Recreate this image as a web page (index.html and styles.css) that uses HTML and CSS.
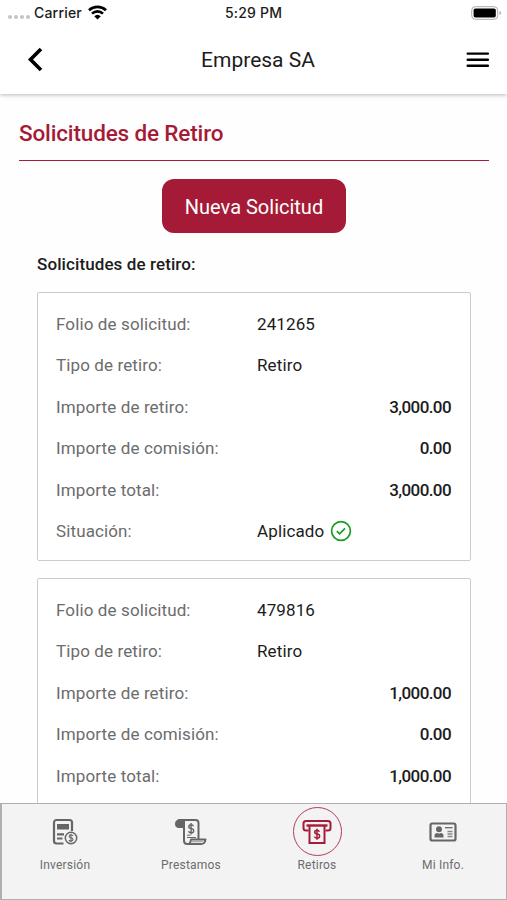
FILE: index.html
```html
<!DOCTYPE html>
<html lang="es">
<head>
    <meta charset="UTF-8">
    <meta name="viewport" content="width=device-width, initial-scale=1.0">
    <title>Solicitudes de Retiro</title>
    <link rel="stylesheet" href="styles.css">
</head>
<body>
    <div class="app">
        <header class="top">
            <div class="status">
                <div class="carrier">
                    <span class="dots"><i></i><i></i><i></i><i></i></span>
                    <span>Carrier</span>
                    <svg width="19" height="15" viewBox="0 0 19 15" fill="none" stroke="#000" stroke-width="2.6">
                        <path d="M1 5.3a12.3 12.3 0 0 1 17 0M4 8.6a8 8 0 0 1 11 0"/>
                        <path d="M9.5 14.5L6.2 11.2a4.8 4.8 0 0 1 6.6 0z" fill="#000" stroke="none"/>
                    </svg>
                </div>
                <div class="time">5:29 PM</div>
                <svg class="battery" width="31" height="14" viewBox="0 0 31 14">
                    <rect x=".7" y=".7" width="26" height="12.6" rx="3.6" fill="none" stroke="#aaa"/>
                    <rect x="2.6" y="2.5" width="22.2" height="9" rx="1.8"/>
                    <path d="M28.5 5v4q1.6-.6 1.6-2t-1.6-2z" fill="#aaa"/>
                </svg>
            </div>
            <nav class="bar">
                <svg width="16" height="26" viewBox="0 0 16 26" fill="none" stroke="#000" stroke-width="3.6">
                    <path d="M14 2L3.5 12.5L14 23"/>
                </svg>
                <h1>Empresa SA</h1>
                <svg width="24" height="18" viewBox="0 0 24 18" stroke="#000" stroke-width="2.4" stroke-linecap="round">
                    <path d="M1.7 2.6h20.2M1.7 8.7h20.2M1.7 14.8h20.2"/>
                </svg>
            </nav>
        </header>

        <main>
            <h2>Solicitudes de Retiro</h2>
            <button class="new">Nueva Solicitud</button>
            <h3>Solicitudes de retiro:</h3>

            <section class="card">
                <div class="row"><span>Folio de solicitud:</span><b>241265</b></div>
                <div class="row"><span>Tipo de retiro:</span><b>Retiro</b></div>
                <div class="row"><span>Importe de retiro:</span><b class="amount">3,000.00</b></div>
                <div class="row"><span>Importe de comisión:</span><b class="amount">0.00</b></div>
                <div class="row"><span>Importe total:</span><b class="amount">3,000.00</b></div>
                <div class="row"><span>Situación:</span><b class="state">Aplicado
                    <svg width="22" height="22" viewBox="0 0 22 22" fill="none" stroke="#1c9c27" stroke-width="1.7">
                        <circle cx="11" cy="11" r="9.4"/>
                        <path d="M6.8 11.2l2.8 2.7 5.4-5.6"/>
                    </svg></b>
                </div>
            </section>

            <section class="card">
                <div class="row"><span>Folio de solicitud:</span><b>479816</b></div>
                <div class="row"><span>Tipo de retiro:</span><b>Retiro</b></div>
                <div class="row"><span>Importe de retiro:</span><b class="amount">1,000.00</b></div>
                <div class="row"><span>Importe de comisión:</span><b class="amount">0.00</b></div>
                <div class="row"><span>Importe total:</span><b class="amount">1,000.00</b></div>
            </section>
        </main>

        <footer class="tabs">
            <a class="tab">
                <span class="icon">
                    <svg width="26" height="28" viewBox="0 0 26 28" fill="none" stroke="#666" stroke-width="2.2">
                        <path d="M11.5 25.5h-7A2.5 2.5 0 0 1 2 23V4.5A2.5 2.5 0 0 1 4.5 2h13A2.5 2.5 0 0 1 20 4.5V13"/>
                        <path d="M5 6h12v5.5H5z" fill="#666" stroke="none"/>
                        <path d="M5 16.3h7M5 20.5h5.5"/>
                        <circle cx="19" cy="20" r="5.7" stroke-width="1.5"/>
                        <path d="M21 18q-.5-1.2-2-1.2-1.8 0-1.8 1.5t1.8 1.6q2 .2 2 1.7T19 23.2q-1.7 0-2.1-1.2M19 15.8v8.4" stroke-width="1.1"/>
                    </svg>
                </span>
                Inversión
            </a>
            <a class="tab">
                <span class="icon">
                    <svg width="32" height="28" viewBox="0 0 32 28" fill="none" stroke="#666" stroke-width="2" stroke-linejoin="round">
                        <path d="M9 9H3.5Q1 8.7 1 6t3-4h5z" fill="#666"/>
                        <path d="M5 2h15.5q3 0 3 3v16.5M9 6v16.5q0 3.5 3.2 3.5H26q4 0 4.5-4.5H16q-.5 4.5-3.5 4.5"/>
                        <path d="M16 24.2q.8-.6 1-1.7h12q-.8 1.7-3.5 1.7z" fill="#aaa" stroke="none"/>
                        <path d="M18.5 8.2q-.6-1.5-2.4-1.5-2.3 0-2.3 1.9t2.4 2q2.5.1 2.5 2.2t-2.6 2q-2.1 0-2.6-1.6M16.1 5v11.5" stroke-width="1.4"/>
                        <path d="M12 17.2h3.5M12 19.5h9" stroke-width="1"/>
                    </svg>
                </span>
                Prestamos
            </a>
            <a class="tab">
                <span class="icon active">
                    <svg width="30" height="26" viewBox="0 0 30 26" fill="none" stroke="#a51a36" stroke-width="2">
                        <path d="M6.5 11.5H4q-2.5 0-2.5-2.5V4.5Q1.5 2 4 2h22q2.5 0 2.5 2.5V9q0 2.5-2.5 2.5h-2.5"/>
                        <path d="M4.5 6.5h21" stroke-width="2.4"/>
                        <path d="M7.5 7v17h15V7"/>
                        <path d="M17.4 12.8q-.6-1.5-2.4-1.5-2.3 0-2.3 1.8t2.4 2q2.5.1 2.5 2.1t-2.6 2q-2.1 0-2.6-1.6M15 9.8v10.9" stroke-width="1.5"/>
                    </svg>
                </span>
                Retiros
            </a>
            <a class="tab">
                <span class="icon">
                    <svg width="28" height="20" viewBox="0 0 28 20" fill="none" stroke="#666" stroke-width="2.2">
                        <rect x="1.5" y="1.5" width="25" height="17" rx="1.8"/>
                        <circle cx="10" cy="7.2" r="3" fill="#666" stroke="none"/>
                        <path d="M5.5 15.5v-1.8q0-2.7 3-2.7l1.5.8 1.5-.8q3 0 3 2.7v1.8z" fill="#666" stroke="none"/>
                        <path d="M16 5.7h7.5" stroke-width="1.3"/>
                        <path d="M18.5 9.5h5M18.5 12h5M18.5 14.5h5" stroke-width="1.3" stroke="#888"/>
                    </svg>
                </span>
                Mi Info.
            </a>
        </footer>
    </div>
</body>
</html>
```
FILE: styles.css
```css
* {
    box-sizing: border-box;
}
body {
    margin: 0;
    font-family: Roboto, sans-serif;
    background-color: #fefefe;
    color: #1c1c1c;
}
.app {
    display: flex;
    flex-direction: column;
    height: 900px;
    overflow: hidden;
}
.top {
    flex: none;
    height: 94px;
    background-color: #fff;
    box-shadow: 0 1px 4px rgba(0, 0, 0, 0.28);
}
.status {
    display: grid;
    grid-template-columns: 1fr auto 1fr;
    align-items: center;
    height: 25px;
    padding: 0 5px 0 8px;
    font-family: Inter, sans-serif;
    font-size: 14px;
    font-weight: 500;
    letter-spacing: 0.2px;
}
.carrier {
    display: flex;
    align-items: center;
    gap: 6px;
}
.dots {
    display: flex;
    gap: 2px;
    padding-top: 8px;
    margin-right: -2px;
}
.dots i {
    width: 4px;
    height: 4px;
    border-radius: 50%;
    background-color: #c4c4c4;
}
.time {
    margin-right: 3px;
}
.battery {
    justify-self: end;
}
.bar {
    display: grid;
    grid-template-columns: 16px 1fr 24px;
    align-items: center;
    height: 69px;
    padding: 0 17px 0 27px;
}
h1 {
    margin: 1px 0 0;
    padding-left: 7px;
    font-size: 21px;
    font-weight: 400;
    text-align: center;
}
main {
    flex: 1;
    min-height: 0;
    overflow: hidden;
    padding: 0 18px 0 19px;
}
h2 {
    height: 67px;
    margin: 0 0 18px;
    padding-top: 26px;
    border-bottom: 1px solid #a51a36;
    color: #a51a36;
    font-size: 22.5px;
    line-height: 26px;
    font-weight: 500;
    letter-spacing: -0.15px;
}
.new {
    display: block;
    width: 184px;
    height: 54px;
    margin: 0 auto;
    padding-top: 2px;
    border: none;
    border-radius: 12px;
    background-color: #a51a36;
    color: #fff;
    font-family: inherit;
    font-size: 20px;
}
h3 {
    margin: 21px 18px 17px;
    font-size: 17px;
    line-height: 21px;
    font-weight: 500;
    letter-spacing: 0.1px;
}
.card {
    margin: 0 18px 17px;
    padding: 10px 18px 8px;
    border: 1px solid #ccc;
    border-radius: 2px;
    background-color: #fff;
}
.row {
    display: grid;
    grid-template-columns: 201px 1fr;
    align-items: center;
    height: 41.5px;
    font-size: 17px;
    letter-spacing: 0.12px;
}
.row span {
    color: #6c6c6c;
}
.row b {
    font-weight: 400;
}
.row .amount {
    padding-right: 1px;
    font-weight: 500;
    text-align: right;
    letter-spacing: -0.6px;
}
.row .state {
    display: flex;
    align-items: center;
    gap: 6px;
}
.tabs {
    flex: none;
    display: grid;
    grid-template-columns: repeat(4, 1fr);
    height: 97px;
    border: 1px solid #b0b0b0;
    border-left-width: 2px;
    background-color: #f3f3f3;
}
.tab {
    display: flex;
    flex-direction: column;
    align-items: center;
    padding-top: 3px;
    color: #6c6c6c;
    font-size: 12px;
    line-height: 19px;
    letter-spacing: 0.2px;
}
.icon {
    display: flex;
    align-items: center;
    justify-content: center;
    width: 49px;
    height: 49px;
}
.active {
    border: 1px solid #b53c54;
    border-radius: 50%;
}
```
